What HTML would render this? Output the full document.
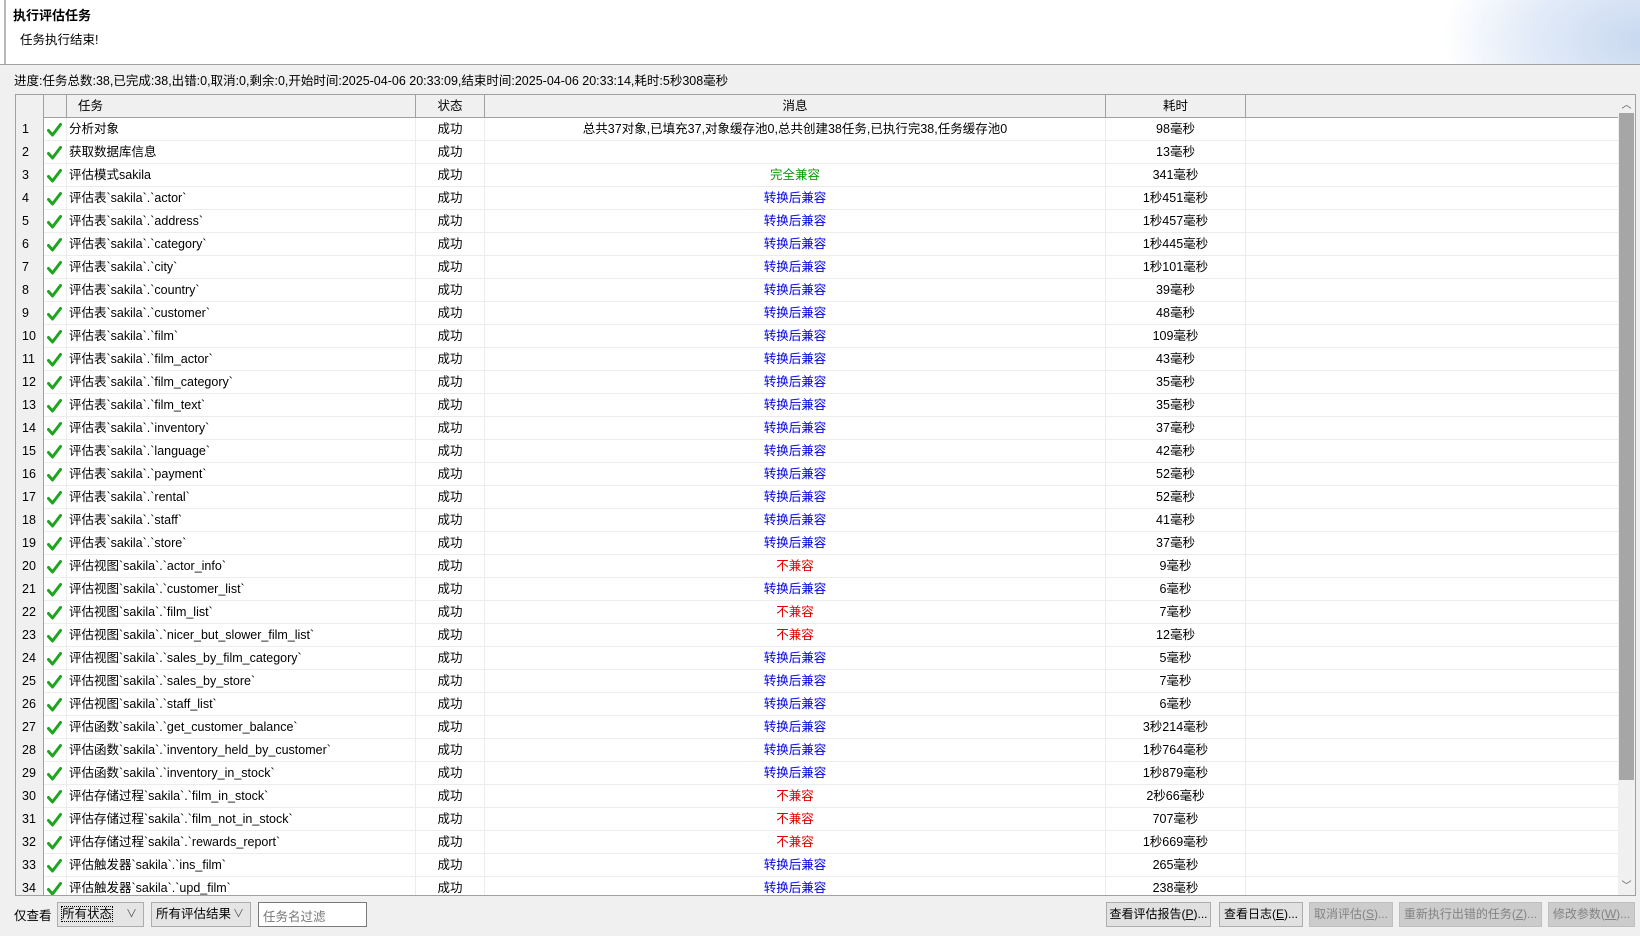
<!DOCTYPE html>
<html><head><meta charset="utf-8">
<style>
*{box-sizing:border-box;margin:0;padding:0}
body{width:1640px;height:936px;overflow:hidden;background:#f0f0f0;font-family:"Liberation Sans","Noto Sans CJK SC",sans-serif;font-size:12.5px;color:#000;position:relative}
#top{position:absolute;left:0;top:0;width:1640px;height:65px;background:#fff;border-bottom:1px solid #a0a0a0;overflow:hidden}
#top .lb{position:absolute;left:4px;top:0;width:2px;height:65px;background:#b8b8b8}
#top h1{position:absolute;left:13px;top:5px;font-size:13px;font-weight:bold}
#top .sub{position:absolute;left:20px;top:29px}
#top .deco{position:absolute;right:-60px;top:-80px;width:260px;height:200px;border-radius:50%;background:radial-gradient(ellipse at 80% 60%,#c8d8f0 0%,#e2ebf8 40%,rgba(255,255,255,0) 70%)}
#prog{position:absolute;left:14px;top:70px}
#tbl{position:absolute;left:15px;top:94px;width:1621px;height:802px;background:#fff;border:1px solid #a0a0a0;overflow:hidden}
.row{position:absolute;left:0;height:23px;width:1603px;border-bottom:1px solid #ececec}
.row div{position:absolute;top:0;height:23px;line-height:23px;white-space:nowrap;overflow:hidden}
.hd{background:#f0f0f0;border-bottom:1px solid #a0a0a0}
.hd div{border-right:1px solid #a0a0a0}
.c0{left:0;width:28px;padding-left:6px;background:#f0f0f0;border-right:1px solid #a0a0a0}
.c1{left:28px;width:23px;border-right:1px solid #ececec}
.c2{left:51px;width:349px;padding-left:2px;border-right:1px solid #ececec}
.c3{left:400px;width:69px;text-align:center;border-right:1px solid #ececec}
.c4{left:469px;width:621px;text-align:center;border-right:1px solid #ececec}
.c5{left:1090px;width:140px;text-align:center;border-right:1px solid #ececec}
.hd .c2{padding-left:11px}
.ck{width:15px;height:14px;margin:5px 0 0 3px}
.b{color:#0000e0}.g{color:#0a9a0a}.r{color:#e00000}
#sb{position:absolute;right:0;top:0;width:17px;height:800px;background:#f0f0f0}
#sb .th{position:absolute;left:1px;top:18px;width:15px;height:667px;background:#a6a6a6}
#sb .a{position:absolute;left:0;width:17px;text-align:center;font-size:10px;color:#555}
#bot{position:absolute;left:0;top:898px;width:1640px;height:38px}
.lbl{position:absolute;left:14px;top:7px}
.sel{position:absolute;top:4px;height:25px;background:#e5e5e5;border:1px solid #adadad;padding:3px 4px;line-height:17px;white-space:nowrap}
.sel span.v{position:absolute;right:6px;top:3px;color:#555;font-size:11px}
.inp{position:absolute;top:4px;height:25px;background:#fff;border:1px solid #7a7a7a;padding:3px 4px;color:#777}
.btn{position:absolute;top:4px;height:25px;background:#e1e1e1;border:1px solid #adadad;text-align:center;line-height:23px;white-space:nowrap;font-size:12px}
.dis{background:#cccccc;border-color:#bfbfbf;color:#838383}
</style></head><body>
<div id="top"><div class="lb"></div><div class="deco"></div><h1>执行评估任务</h1><div class="sub">任务执行结束!</div></div>
<div id="prog">进度:任务总数:38,已完成:38,出错:0,取消:0,剩余:0,开始时间:2025-04-06 20:33:09,结束时间:2025-04-06 20:33:14,耗时:5秒308毫秒</div>
<div id="tbl">
<div class="row hd" style="top:0"><div class="c0"></div><div class="c1"></div><div class="c2">任务</div><div class="c3">状态</div><div class="c4">消息</div><div class="c5">耗时</div></div>
<svg width="0" height="0" style="position:absolute"><defs><symbol id="ck" viewBox="0 0 15 14"><path d="M1.5 7.5 L5.5 12 L13.5 1.5" fill="none" stroke="#1ea51e" stroke-width="3" stroke-linecap="round" stroke-linejoin="round"/></symbol></defs></svg>
<div class="row" style="top:23px"><div class="c0">1</div><div class="c1"><svg class="ck"><use href="#ck"/></svg></div><div class="c2">分析对象</div><div class="c3">成功</div><div class="c4">总共37对象,已填充37,对象缓存池0,总共创建38任务,已执行完38,任务缓存池0</div><div class="c5">98毫秒</div></div>
<div class="row" style="top:46px"><div class="c0">2</div><div class="c1"><svg class="ck"><use href="#ck"/></svg></div><div class="c2">获取数据库信息</div><div class="c3">成功</div><div class="c4"></div><div class="c5">13毫秒</div></div>
<div class="row" style="top:69px"><div class="c0">3</div><div class="c1"><svg class="ck"><use href="#ck"/></svg></div><div class="c2">评估模式sakila</div><div class="c3">成功</div><div class="c4 g">完全兼容</div><div class="c5">341毫秒</div></div>
<div class="row" style="top:92px"><div class="c0">4</div><div class="c1"><svg class="ck"><use href="#ck"/></svg></div><div class="c2">评估表`sakila`.`actor`</div><div class="c3">成功</div><div class="c4 b">转换后兼容</div><div class="c5">1秒451毫秒</div></div>
<div class="row" style="top:115px"><div class="c0">5</div><div class="c1"><svg class="ck"><use href="#ck"/></svg></div><div class="c2">评估表`sakila`.`address`</div><div class="c3">成功</div><div class="c4 b">转换后兼容</div><div class="c5">1秒457毫秒</div></div>
<div class="row" style="top:138px"><div class="c0">6</div><div class="c1"><svg class="ck"><use href="#ck"/></svg></div><div class="c2">评估表`sakila`.`category`</div><div class="c3">成功</div><div class="c4 b">转换后兼容</div><div class="c5">1秒445毫秒</div></div>
<div class="row" style="top:161px"><div class="c0">7</div><div class="c1"><svg class="ck"><use href="#ck"/></svg></div><div class="c2">评估表`sakila`.`city`</div><div class="c3">成功</div><div class="c4 b">转换后兼容</div><div class="c5">1秒101毫秒</div></div>
<div class="row" style="top:184px"><div class="c0">8</div><div class="c1"><svg class="ck"><use href="#ck"/></svg></div><div class="c2">评估表`sakila`.`country`</div><div class="c3">成功</div><div class="c4 b">转换后兼容</div><div class="c5">39毫秒</div></div>
<div class="row" style="top:207px"><div class="c0">9</div><div class="c1"><svg class="ck"><use href="#ck"/></svg></div><div class="c2">评估表`sakila`.`customer`</div><div class="c3">成功</div><div class="c4 b">转换后兼容</div><div class="c5">48毫秒</div></div>
<div class="row" style="top:230px"><div class="c0">10</div><div class="c1"><svg class="ck"><use href="#ck"/></svg></div><div class="c2">评估表`sakila`.`film`</div><div class="c3">成功</div><div class="c4 b">转换后兼容</div><div class="c5">109毫秒</div></div>
<div class="row" style="top:253px"><div class="c0">11</div><div class="c1"><svg class="ck"><use href="#ck"/></svg></div><div class="c2">评估表`sakila`.`film_actor`</div><div class="c3">成功</div><div class="c4 b">转换后兼容</div><div class="c5">43毫秒</div></div>
<div class="row" style="top:276px"><div class="c0">12</div><div class="c1"><svg class="ck"><use href="#ck"/></svg></div><div class="c2">评估表`sakila`.`film_category`</div><div class="c3">成功</div><div class="c4 b">转换后兼容</div><div class="c5">35毫秒</div></div>
<div class="row" style="top:299px"><div class="c0">13</div><div class="c1"><svg class="ck"><use href="#ck"/></svg></div><div class="c2">评估表`sakila`.`film_text`</div><div class="c3">成功</div><div class="c4 b">转换后兼容</div><div class="c5">35毫秒</div></div>
<div class="row" style="top:322px"><div class="c0">14</div><div class="c1"><svg class="ck"><use href="#ck"/></svg></div><div class="c2">评估表`sakila`.`inventory`</div><div class="c3">成功</div><div class="c4 b">转换后兼容</div><div class="c5">37毫秒</div></div>
<div class="row" style="top:345px"><div class="c0">15</div><div class="c1"><svg class="ck"><use href="#ck"/></svg></div><div class="c2">评估表`sakila`.`language`</div><div class="c3">成功</div><div class="c4 b">转换后兼容</div><div class="c5">42毫秒</div></div>
<div class="row" style="top:368px"><div class="c0">16</div><div class="c1"><svg class="ck"><use href="#ck"/></svg></div><div class="c2">评估表`sakila`.`payment`</div><div class="c3">成功</div><div class="c4 b">转换后兼容</div><div class="c5">52毫秒</div></div>
<div class="row" style="top:391px"><div class="c0">17</div><div class="c1"><svg class="ck"><use href="#ck"/></svg></div><div class="c2">评估表`sakila`.`rental`</div><div class="c3">成功</div><div class="c4 b">转换后兼容</div><div class="c5">52毫秒</div></div>
<div class="row" style="top:414px"><div class="c0">18</div><div class="c1"><svg class="ck"><use href="#ck"/></svg></div><div class="c2">评估表`sakila`.`staff`</div><div class="c3">成功</div><div class="c4 b">转换后兼容</div><div class="c5">41毫秒</div></div>
<div class="row" style="top:437px"><div class="c0">19</div><div class="c1"><svg class="ck"><use href="#ck"/></svg></div><div class="c2">评估表`sakila`.`store`</div><div class="c3">成功</div><div class="c4 b">转换后兼容</div><div class="c5">37毫秒</div></div>
<div class="row" style="top:460px"><div class="c0">20</div><div class="c1"><svg class="ck"><use href="#ck"/></svg></div><div class="c2">评估视图`sakila`.`actor_info`</div><div class="c3">成功</div><div class="c4 r">不兼容</div><div class="c5">9毫秒</div></div>
<div class="row" style="top:483px"><div class="c0">21</div><div class="c1"><svg class="ck"><use href="#ck"/></svg></div><div class="c2">评估视图`sakila`.`customer_list`</div><div class="c3">成功</div><div class="c4 b">转换后兼容</div><div class="c5">6毫秒</div></div>
<div class="row" style="top:506px"><div class="c0">22</div><div class="c1"><svg class="ck"><use href="#ck"/></svg></div><div class="c2">评估视图`sakila`.`film_list`</div><div class="c3">成功</div><div class="c4 r">不兼容</div><div class="c5">7毫秒</div></div>
<div class="row" style="top:529px"><div class="c0">23</div><div class="c1"><svg class="ck"><use href="#ck"/></svg></div><div class="c2">评估视图`sakila`.`nicer_but_slower_film_list`</div><div class="c3">成功</div><div class="c4 r">不兼容</div><div class="c5">12毫秒</div></div>
<div class="row" style="top:552px"><div class="c0">24</div><div class="c1"><svg class="ck"><use href="#ck"/></svg></div><div class="c2">评估视图`sakila`.`sales_by_film_category`</div><div class="c3">成功</div><div class="c4 b">转换后兼容</div><div class="c5">5毫秒</div></div>
<div class="row" style="top:575px"><div class="c0">25</div><div class="c1"><svg class="ck"><use href="#ck"/></svg></div><div class="c2">评估视图`sakila`.`sales_by_store`</div><div class="c3">成功</div><div class="c4 b">转换后兼容</div><div class="c5">7毫秒</div></div>
<div class="row" style="top:598px"><div class="c0">26</div><div class="c1"><svg class="ck"><use href="#ck"/></svg></div><div class="c2">评估视图`sakila`.`staff_list`</div><div class="c3">成功</div><div class="c4 b">转换后兼容</div><div class="c5">6毫秒</div></div>
<div class="row" style="top:621px"><div class="c0">27</div><div class="c1"><svg class="ck"><use href="#ck"/></svg></div><div class="c2">评估函数`sakila`.`get_customer_balance`</div><div class="c3">成功</div><div class="c4 b">转换后兼容</div><div class="c5">3秒214毫秒</div></div>
<div class="row" style="top:644px"><div class="c0">28</div><div class="c1"><svg class="ck"><use href="#ck"/></svg></div><div class="c2">评估函数`sakila`.`inventory_held_by_customer`</div><div class="c3">成功</div><div class="c4 b">转换后兼容</div><div class="c5">1秒764毫秒</div></div>
<div class="row" style="top:667px"><div class="c0">29</div><div class="c1"><svg class="ck"><use href="#ck"/></svg></div><div class="c2">评估函数`sakila`.`inventory_in_stock`</div><div class="c3">成功</div><div class="c4 b">转换后兼容</div><div class="c5">1秒879毫秒</div></div>
<div class="row" style="top:690px"><div class="c0">30</div><div class="c1"><svg class="ck"><use href="#ck"/></svg></div><div class="c2">评估存储过程`sakila`.`film_in_stock`</div><div class="c3">成功</div><div class="c4 r">不兼容</div><div class="c5">2秒66毫秒</div></div>
<div class="row" style="top:713px"><div class="c0">31</div><div class="c1"><svg class="ck"><use href="#ck"/></svg></div><div class="c2">评估存储过程`sakila`.`film_not_in_stock`</div><div class="c3">成功</div><div class="c4 r">不兼容</div><div class="c5">707毫秒</div></div>
<div class="row" style="top:736px"><div class="c0">32</div><div class="c1"><svg class="ck"><use href="#ck"/></svg></div><div class="c2">评估存储过程`sakila`.`rewards_report`</div><div class="c3">成功</div><div class="c4 r">不兼容</div><div class="c5">1秒669毫秒</div></div>
<div class="row" style="top:759px"><div class="c0">33</div><div class="c1"><svg class="ck"><use href="#ck"/></svg></div><div class="c2">评估触发器`sakila`.`ins_film`</div><div class="c3">成功</div><div class="c4 b">转换后兼容</div><div class="c5">265毫秒</div></div>
<div class="row" style="top:782px"><div class="c0">34</div><div class="c1"><svg class="ck"><use href="#ck"/></svg></div><div class="c2">评估触发器`sakila`.`upd_film`</div><div class="c3">成功</div><div class="c4 b">转换后兼容</div><div class="c5">238毫秒</div></div>
<div id="sb"><div class="a" style="top:1px">︿</div><div class="th"></div><div class="a" style="top:782px">﹀</div></div>
</div>
<div id="bot">
<div class="lbl">仅查看</div>
<div class="sel" style="left:57px;width:87px"><span style="outline:1px dotted #000">所有状态</span><span class="v">∨</span></div>
<div class="sel" style="left:151px;width:100px">所有评估结果<span class="v">∨</span></div>
<div class="inp" style="left:258px;width:109px">任务名过滤</div>
<div class="btn" style="left:1106px;width:105px">查看评估报告(<u>P</u>)...</div>
<div class="btn" style="left:1219px;width:84px">查看日志(<u>E</u>)...</div>
<div class="btn dis" style="left:1309px;width:84px">取消评估(<u>S</u>)...</div>
<div class="btn dis" style="left:1399px;width:143px">重新执行出错的任务(<u>Z</u>)...</div>
<div class="btn dis" style="left:1548px;width:87px">修改参数(<u>W</u>)...</div>
</div>
</body></html>
